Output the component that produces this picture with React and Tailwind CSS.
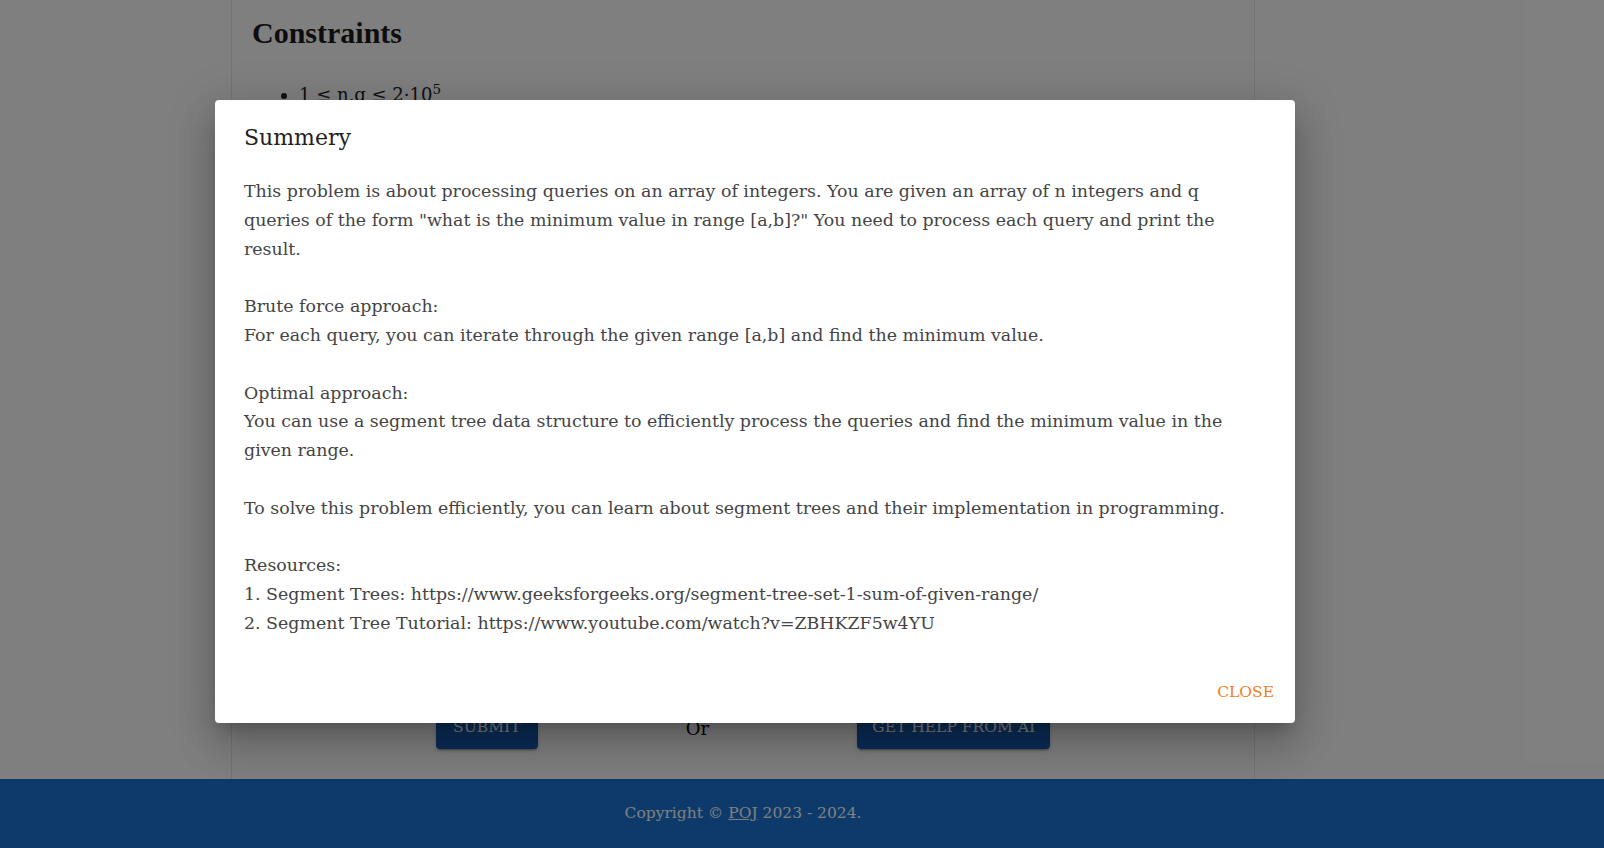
import React from "react";

const bodyText = `This problem is about processing queries on an array of integers. You are given an array of n integers and q
queries of the form "what is the minimum value in range [a,b]?" You need to process each query and print the
result.

Brute force approach:
For each query, you can iterate through the given range [a,b] and find the minimum value.

Optimal approach:
You can use a segment tree data structure to efficiently process the queries and find the minimum value in the
given range.

To solve this problem efficiently, you can learn about segment trees and their implementation in programming.

Resources:
1. Segment Trees: https://www.geeksforgeeks.org/segment-tree-set-1-sum-of-given-range/
2. Segment Tree Tutorial: https://www.youtube.com/watch?v=ZBHKZF5w4YU`;

export default function App() {
  return (
    <div className="relative h-[848px] w-full overflow-hidden bg-white font-['DejaVu_Serif',serif]">
      <div className="flex h-full flex-col">
        <main className="flex-1">
          <div className="ml-[231px] flex h-full w-[1024px] flex-col border-x border-[#e6e6e6] px-[20px]">
            <h2 className="mt-[15px] h-[36px] font-['Liberation_Serif',serif] text-[30px] font-bold leading-[36px] text-[#1a1a1a]">
              Constraints
            </h2>
            <ul className="mt-[30px] h-[19px] overflow-hidden list-disc pl-[47px] text-[18px] leading-[28.8px] text-[#222]">
              <li>
                1 ≤ n,q ≤ 2·10<sup>5</sup>
              </li>
            </ul>
            <div className="mt-auto mb-[30px] flex items-center justify-center gap-[148px]">
              <button className="flex h-[42px] w-[102px] items-center justify-center rounded-[4px] bg-[#165aae] text-[15.5px] text-white shadow-[0_3px_1px_-2px_rgba(0,0,0,0.2),0_2px_2px_0_rgba(0,0,0,0.14),0_1px_5px_0_rgba(0,0,0,0.12)]">
                SUBMIT
              </button>
              <span className="text-[18px] text-black">Or</span>
              <button className="flex h-[42px] w-[193px] items-center justify-center rounded-[4px] bg-[#165aae] text-[15.5px] text-white shadow-[0_3px_1px_-2px_rgba(0,0,0,0.2),0_2px_2px_0_rgba(0,0,0,0.14),0_1px_5px_0_rgba(0,0,0,0.12)]">
                GET HELP FROM AI
              </button>
            </div>
          </div>
        </main>
        <footer className="flex h-[69px] items-center bg-[#1a74d6]">
          <div className="ml-[231px] w-[1024px] text-center text-[15.5px] text-white">
            Copyright © <span className="underline">POJ</span> 2023 - 2024.
          </div>
        </footer>
      </div>

      <div className="absolute inset-0 bg-black/50" />

      <div className="absolute left-[215px] top-[100px] flex h-[623px] w-[1080px] flex-col rounded-[4px] bg-white px-[29px] pt-[22px] shadow-[0_11px_15px_-7px_rgba(0,0,0,0.2),0_24px_38px_3px_rgba(0,0,0,0.14),0_9px_46px_8px_rgba(0,0,0,0.12)]">
        <h2 className="h-[32px] text-[22px] leading-[32px] text-[#222]">Summery</h2>
        <p className="mt-[23px] whitespace-pre text-[17.4px] leading-[28.8px] text-[#444]">
          {bodyText}
        </p>
        <div className="mt-auto mb-[21px] mr-[-8px] flex justify-end">
          <span className="text-[15.5px] leading-[20px] text-[#f07d18]">CLOSE</span>
        </div>
      </div>
    </div>
  );
}
